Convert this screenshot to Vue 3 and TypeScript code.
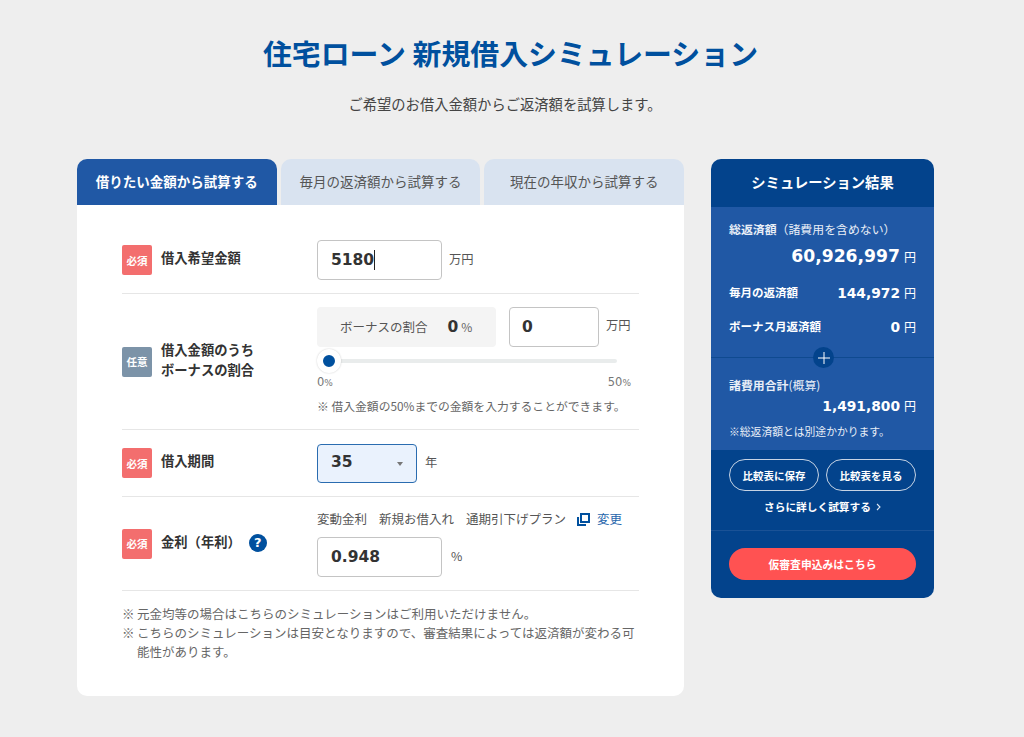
<script setup lang="ts">
const tabs: string[] = ['借りたい金額から試算する', '毎月の返済額から試算する', '現在の年収から試算する']
</script>

<template>
  <main class="page">
    <h1 class="title">住宅ローン 新規借入シミュレーション</h1>
    <p class="lead">ご希望のお借入金額からご返済額を試算します。</p>
    <div class="columns">
      <section class="panel">
        <div class="tabs">
          <div v-for="(t, i) in tabs" :key="t" class="tab" :class="{ active: i === 0 }">{{ t }}</div>
        </div>
        <div class="body">
          <div class="row row1">
            <div class="label"><span class="badge req">必須</span><span class="name">借入希望金額</span></div>
            <div class="field inline">
              <div class="input w125 caret">5180<i></i></div>
              <span class="unit">万円</span>
            </div>
          </div>
          <div class="row row2">
            <div class="label"><span class="badge opt">任意</span><span class="name">借入金額のうち<br />ボーナスの割合</span></div>
            <div class="field">
              <div class="inline bonus">
                <div class="ratio"><span>ボーナスの割合</span><b>0</b><small>%</small></div>
                <div class="input w89">0</div>
                <span class="unit">万円</span>
              </div>
              <div class="slider"><div class="track"></div><div class="thumb"></div></div>
              <div class="scale"><span>0<small>%</small></span><span>50<small>%</small></span></div>
              <p class="hint">※ 借入金額の50%までの金額を入力することができます。</p>
            </div>
          </div>
          <div class="row row3">
            <div class="label"><span class="badge req">必須</span><span class="name">借入期間</span></div>
            <div class="field inline">
              <div class="select">35<i class="arrow"></i></div>
              <span class="unit">年</span>
            </div>
          </div>
          <div class="row row4">
            <div class="label">
              <span class="badge req">必須</span><span class="name">金利（年利）</span>
              <span class="help">?</span>
            </div>
            <div class="field">
              <div class="plan">
                <span>変動金利</span><span>新規お借入れ</span><span>通期引下げプラン</span>
                <a class="change">
                  <svg width="13" height="13" viewBox="0 0 13 13" fill="none" stroke="#00509e" stroke-width="2">
                    <rect x="4" y="1" width="8" height="8" />
                    <path d="M1 4v8h8" />
                  </svg>
                  変更
                </a>
              </div>
              <div class="inline">
                <div class="input w125">0.948</div>
                <span class="unit pct">%</span>
              </div>
            </div>
          </div>
          <ul class="notes">
            <li>元金均等の場合はこちらのシミュレーションはご利用いただけません。</li>
            <li>こちらのシミュレーションは目安となりますので、審査結果によっては返済額が変わる可能性があります。</li>
          </ul>
        </div>
      </section>

      <aside class="result">
        <h2 class="r-head">シミュレーション結果</h2>
        <div class="r-main">
          <div class="r-top">
            <p class="r-cap"><b>総返済額</b>（諸費用を含めない）</p>
            <p class="r-total"><b>60,926,997</b><span>円</span></p>
            <div class="r-line first"><b class="r-lab">毎月の返済額</b><p class="r-val"><b>144,972</b><span>円</span></p></div>
            <div class="r-line"><b class="r-lab">ボーナス月返済額</b><p class="r-val"><b>0</b><span>円</span></p></div>
          </div>
          <div class="divider"><span class="plus">
            <svg width="12" height="12" viewBox="0 0 12 12" stroke="#fff" stroke-width="1"><path d="M6 0v12M0 6h12" /></svg>
          </span></div>
          <div class="r-bottom">
            <p class="r-cap"><b>諸費用合計</b>(概算)</p>
            <p class="r-val right"><b>1,491,800</b><span>円</span></p>
            <p class="r-note">※総返済額とは別途かかります。</p>
          </div>
        </div>
        <div class="r-actions">
          <div class="pills">
            <button class="pill" type="button">比較表に保存</button>
            <button class="pill" type="button">比較表を見る</button>
          </div>
          <a class="more">さらに詳しく試算する<svg width="5" height="8" viewBox="0 0 5 8" fill="none" stroke="#dfe7f2" stroke-width="1.1"><path d="M1 1l3 3-3 3" /></svg></a>
        </div>
        <div class="r-apply">
          <button class="apply" type="button">仮審査申込みはこちら</button>
        </div>
      </aside>
    </div>
  </main>
</template>

<style>
html, body { margin: 0; background: #eeeeee; }
</style>

<style scoped>
.page {
  box-sizing: border-box;
  width: 1024px;
  height: 737px;
  overflow: hidden;
  padding-top: 34px;
  color: #333;
  font-family: "Noto Sans CJK JP", sans-serif;
}
.title {
  margin: 0;
  padding-right: 3px;
  height: 36px;
  text-align: center;
  font-size: 28.9px;
  line-height: 36px;
  font-weight: 700;
  color: #00509e;
}
.lead {
  margin: 22px 0 0;
  padding-right: 14px;
  text-align: center;
  font-size: 14.3px;
  line-height: 24px;
  color: #444;
}
.columns {
  display: flex;
  align-items: flex-start;
  gap: 27px;
  margin: 43px 0 0 77px;
}
.panel { width: 607px; }
.tabs { display: flex; gap: 4px; }
.tab {
  flex: 1;
  height: 46px;
  padding-bottom: 2px;
  box-sizing: border-box;
  display: flex;
  align-items: center;
  justify-content: center;
  border-radius: 10px 10px 0 0;
  background: #d9e3f0;
  color: #555;
  font-size: 13.5px;
}
.tab.active { background: #2058a5; color: #fff; font-weight: 700; }
.body {
  background: #fff;
  border-radius: 0 0 10px 10px;
  padding: 35px 45px 35px;
  height: 491px;
  box-sizing: border-box;
}
.row {
  box-sizing: border-box;
  display: grid;
  grid-template-columns: 195px 1fr;
  align-items: center;
  border-bottom: 1px solid #e6e6e6;
}
.row1 { height: 54px; align-items: start; }
.row2 { height: 136px; }
.row2 .field { margin-bottom: 2px; }
.row3 { height: 67px; }
.row4 { height: 94px; }
.label { display: flex; align-items: center; gap: 9px; }
.row1 .label { margin-top: 5px; }
.badge {
  width: 30px;
  height: 30px;
  border-radius: 2px;
  color: #fff;
  font-size: 10.5px;
  font-weight: 700;
  display: flex;
  align-items: center;
  justify-content: center;
  flex: none;
}
.req { background: #f36e6e; }
.opt { background: #7c93a8; }
.name {
  margin-top: -4px;
  font-size: 13.3px;
  line-height: 20px;
  font-weight: 700;
  color: #333;
}
.help {
  width: 18px;
  height: 18px;
  margin-left: -1px;
  margin-top: -2px;
  border-radius: 50%;
  background: #00509e;
  color: #fff;
  font: 700 13px/18px "DejaVu Sans", sans-serif;
  text-align: center;
}
.inline { display: flex; align-items: center; }
.input {
  box-sizing: border-box;
  height: 40px;
  border: 1px solid #c4c4c4;
  border-radius: 4px;
  background: #fff;
  padding-left: 13px;
  font: 700 15.5px/38px "DejaVu Sans", sans-serif;
  color: #333;
  display: flex;
  align-items: center;
}
.w125 { width: 125px; }
.w89 { width: 90px; padding-left: 12px; }
.caret i { display: block; width: 1px; height: 20px; background: #222; }
.unit { margin: -3px 0 0 7px; font-size: 12.3px; color: #555; }
.pct { margin-left: 9px; }
.select {
  position: relative;
  box-sizing: border-box;
  width: 100px;
  height: 39px;
  border: 1px solid #2a6cb0;
  border-radius: 4px;
  background: #eaf2fd;
  padding-left: 13px;
  font: 700 15.5px/35px "DejaVu Sans", sans-serif;
  color: #333;
}
.arrow {
  position: absolute;
  right: 13px;
  top: 17px;
  border-left: 3.5px solid transparent;
  border-right: 3.5px solid transparent;
  border-top: 4px solid #777;
}
.row3 .unit { margin-left: 8px; }
.ratio {
  box-sizing: border-box;
  width: 179px;
  height: 40px;
  margin-right: 13px;
  background: #f4f4f4;
  border-radius: 4px;
  display: flex;
  align-items: center;
  padding-left: 23px;
  font-size: 12.5px;
  color: #555;
}
.ratio b { margin-left: 20px; font: 700 15.5px "DejaVu Sans", sans-serif; color: #333; }
.ratio small { margin-left: 3px; font-size: 12px; color: #666; }
.slider { position: relative; height: 24px; margin-top: 1px; }
.track {
  position: absolute;
  left: 12px;
  right: 22px;
  top: 11px;
  height: 4px;
  border-radius: 2px;
  background: #e9ecec;
}
.thumb {
  position: absolute;
  left: 0;
  top: 1px;
  box-sizing: border-box;
  width: 24px;
  height: 24px;
  border-radius: 50%;
  background: #00509e;
  border: 6px solid #fff;
  box-shadow: 0 0 2px rgba(0,0,0,.2);
}
.scale {
  display: flex;
  justify-content: space-between;
  margin-top: 2px;
  font: 11.5px/16px "DejaVu Sans", sans-serif;
  color: #777;
  width: 314px;
}
.scale small { font-size: 9px; }
.hint { margin: 6px 0 0; font-size: 11.8px; line-height: 18px; color: #666; white-space: nowrap; }
.plan {
  display: flex;
  align-items: center;
  gap: 12px;
  font-size: 12.5px;
  line-height: 18px;
  color: #555;
  margin-bottom: 9px;
  white-space: nowrap;
}
.change { display: flex; align-items: center; gap: 7px; color: #1f66ac; margin-left: -1px; }
.notes {
  list-style: none;
  margin: 13px 0 0;
  padding: 0;
  font-size: 12.5px;
  line-height: 19px;
  color: #666;
}
.notes li { position: relative; padding-left: 15px; }
.notes li::before { content: "※"; position: absolute; left: 0; }

.result {
  width: 223px;
  border-radius: 10px;
  overflow: hidden;
  background: #03438c;
  color: #fff;
}
.r-head {
  margin: 0;
  height: 48px;
  padding-bottom: 3px;
  box-sizing: border-box;
  display: flex;
  align-items: center;
  justify-content: center;
  font-size: 14.3px;
  font-weight: 700;
}
.r-main { background: #2058a5; }
.r-top { padding: 13px 18px 0; height: 150px; box-sizing: border-box; }
.r-cap { margin: 0; font-size: 11.9px; line-height: 18px; color: #e8eef7; }
.r-total { margin: 3px 0 0; text-align: right; line-height: 28px; height: 28px; }
.r-total b { font: 700 17.2px/28px "DejaVu Sans", sans-serif; }
.r-total span, .r-val span { margin-left: 4px; font-size: 12px; }
.r-line { display: flex; justify-content: space-between; align-items: center; height: 34px; }
.r-line.first { margin-top: 6px; }
.r-lab { font-size: 11.5px; }
.r-val { margin: 0; }
.r-line .r-val { margin-top: -3px; }
.r-val b { font: 700 13.8px "DejaVu Sans", sans-serif; }
.divider { position: relative; height: 1px; background: #0f4a90; }
.plus {
  position: absolute;
  left: 102px;
  top: -10px;
  width: 21px;
  height: 21px;
  border-radius: 50%;
  background: #03438c;
  display: flex;
  align-items: center;
  justify-content: center;
}
.r-bottom { padding: 18px 18px 0; height: 92px; box-sizing: border-box; }
.r-val.right { text-align: right; line-height: 22px; height: 22px; margin-top: -1px; }
.r-note { margin: 7px 0 0; font-size: 10.8px; line-height: 18px; color: #e8eef7; }
.r-actions {
  padding: 9px 18px 0;
  height: 81px;
  box-sizing: border-box;
  border-bottom: 1px solid #1a5296;
}
.pills { display: flex; justify-content: space-between; }
.pill {
  width: 90px;
  height: 32px;
  border: 1px solid #c6d3e4;
  border-radius: 16px;
  background: transparent;
  color: #fff;
  padding: 0;
  font: 700 10.5px "Noto Sans CJK JP", sans-serif;
}
.more {
  display: flex;
  align-items: center;
  justify-content: center;
  gap: 5px;
  margin-top: 7px;
  font-size: 10.7px;
  font-weight: 700;
  line-height: 18px;
}
.r-apply { padding: 17px 18px 18px; }
.apply {
  display: block;
  width: 100%;
  height: 32px;
  border: 0;
  border-radius: 16px;
  background: #ff5252;
  color: #fff;
  font: 700 10.8px "Noto Sans CJK JP", sans-serif;
}
</style>
